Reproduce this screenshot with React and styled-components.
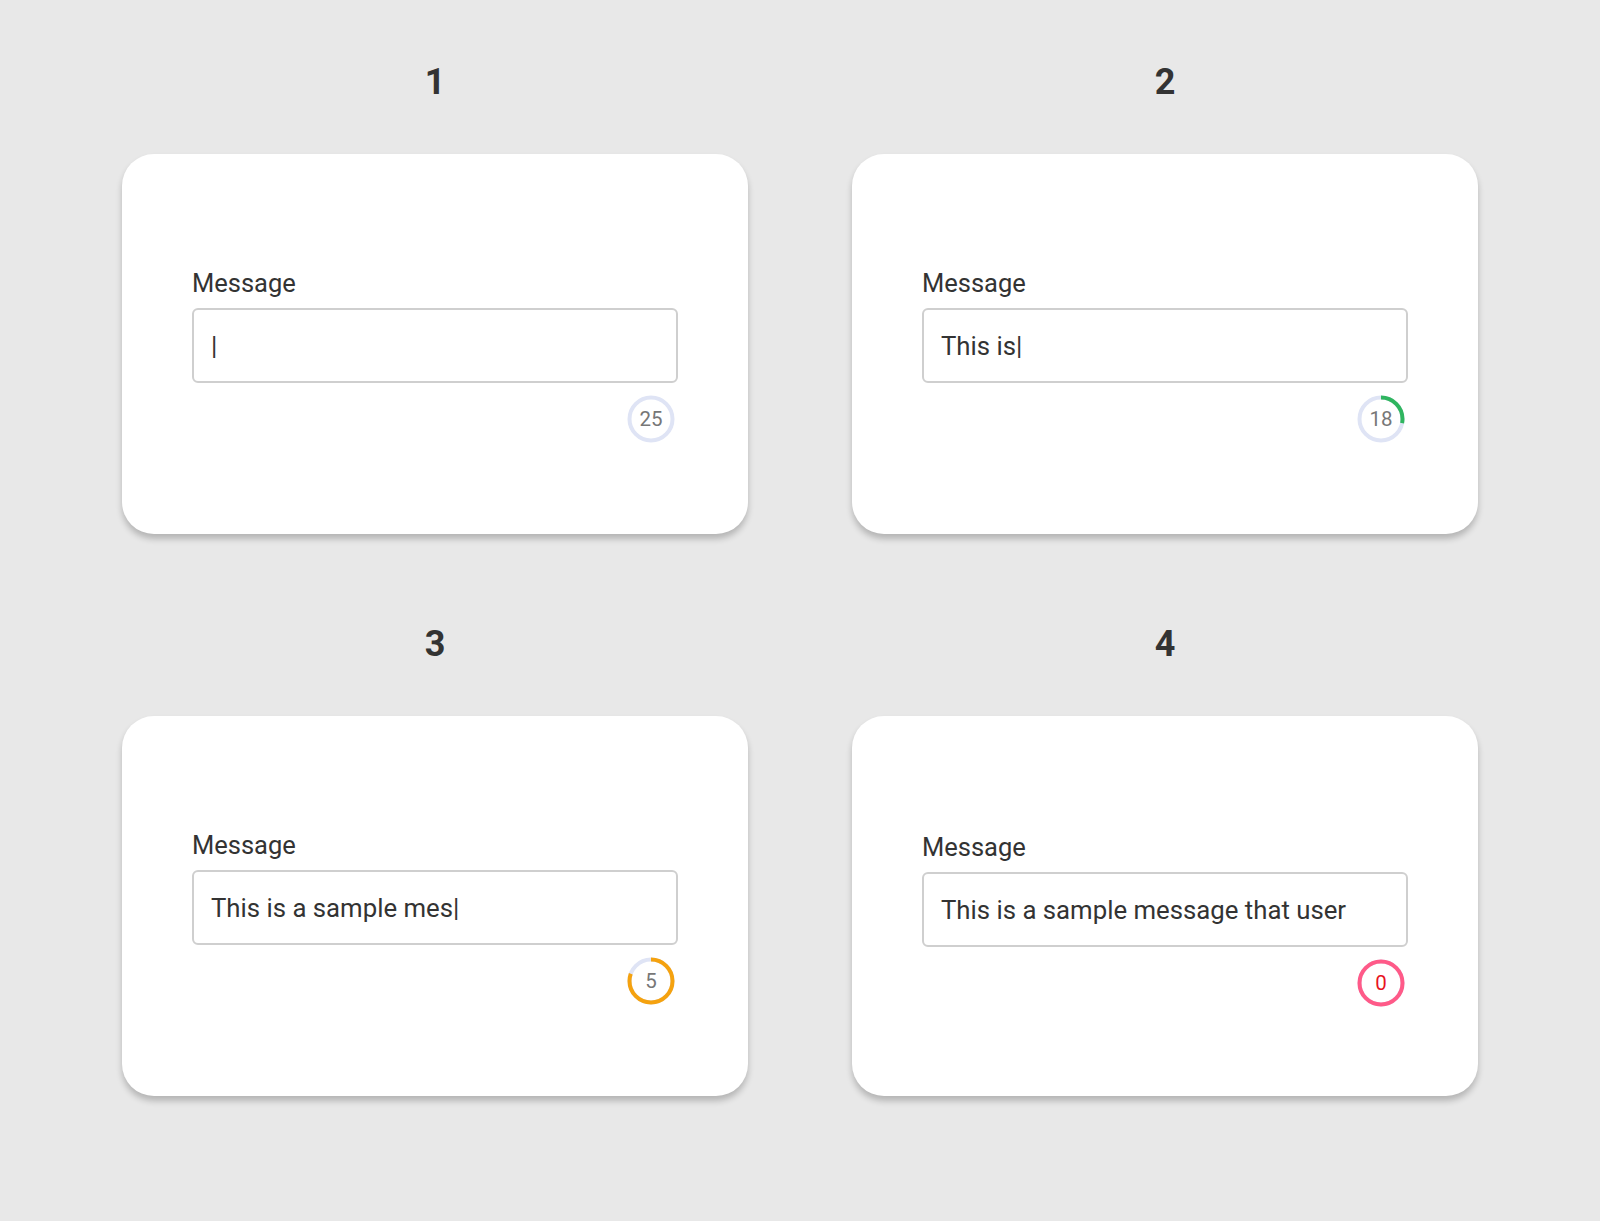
import React from 'react';
import styled, { createGlobalStyle } from 'styled-components';

const GlobalStyle = createGlobalStyle`
  html, body {
    margin: 0;
    padding: 0;
    background-color: #e8e8e8;
    font-family: Roboto, "Liberation Sans", Arial, sans-serif;
  }
  * {
    box-sizing: border-box;
  }
`;

const Page = styled.div`
  min-height: 1221px;
  padding: 61px 122px 0;
  display: grid;
  grid-template-columns: 626px 626px;
  column-gap: 104px;
  row-gap: 89px;
  align-content: start;
`;

const Cell = styled.section`
  display: flex;
  flex-direction: column;
  align-items: center;
`;

const Title = styled.h2`
  margin: 0 0 51px;
  font-size: 36px;
  line-height: 42px;
  font-weight: 700;
  color: #333;
`;

const Card = styled.div`
  width: 626px;
  height: 380px;
  background-color: #fff;
  border-radius: 32px;
  box-shadow: 0 5px 6px rgba(0, 0, 0, 0.22);
  padding: ${(p) => p.$top || 114}px 70px 0;
  display: flex;
  flex-direction: column;
`;

const Label = styled.label`
  font-size: 25.5px;
  line-height: 30px;
  color: #333;
  margin-bottom: 10px;
`;

const Input = styled.input`
  width: 100%;
  height: 75px;
  padding: 0 17px;
  border: 2px solid #cfcfcf;
  border-radius: 6px;
  font-family: inherit;
  font-size: 25.75px;
  color: #333;
  background: #fff;

  &:focus {
    outline: none;
  }
`;

const CounterRow = styled.div`
  display: flex;
  justify-content: flex-end;
  padding-right: 3px;
  margin-top: 12px;
`;

const Counter = styled.div`
  position: relative;
  width: 48px;
  height: 48px;
`;

const CounterText = styled.span`
  position: absolute;
  inset: 0;
  display: flex;
  align-items: center;
  justify-content: center;
  font-size: 20.5px;
  color: ${(p) => p.$color};
`;

const MAX = 25;
const R = 21.5;
const C = 2 * Math.PI * R;

const CharCounter = ({ left, color, textColor }) => {
  const used = (MAX - left) / MAX;
  return (
    <Counter>
      <svg width="48" height="48" viewBox="0 0 48 48">
        <circle cx="24" cy="24" r={R} fill="none" stroke="#dfe4f5" strokeWidth="4" />
        {used > 0 && (
          <circle
            cx="24"
            cy="24"
            r={R}
            fill="none"
            stroke={color}
            strokeWidth="4"
            strokeDasharray={`${C * used} ${C}`}
            transform="rotate(-90 24 24)"
          />
        )}
      </svg>
      <CounterText $color={textColor}>{left}</CounterText>
    </Counter>
  );
};

const states = [
  { n: 1, value: '|', left: 25, color: '#dfe4f5', textColor: '#777' },
  { n: 2, value: 'This is|', left: 18, color: '#2fb55f', textColor: '#777' },
  { n: 3, value: 'This is a sample mes|', left: 5, color: '#f5a20f', textColor: '#777' },
  { n: 4, value: 'This is a sample message that user', left: 0, color: '#ff5a88', textColor: '#e8141e', top: 116 },
];

const App = () => (
  <>
    <GlobalStyle />
    <Page>
      {states.map((s) => (
        <Cell key={s.n}>
          <Title>{s.n}</Title>
          <Card $top={s.top}>
            <Label>Message</Label>
            <Input readOnly value={s.value} />
            <CounterRow>
              <CharCounter left={s.left} color={s.color} textColor={s.textColor} />
            </CounterRow>
          </Card>
        </Cell>
      ))}
    </Page>
  </>
);

export default App;
